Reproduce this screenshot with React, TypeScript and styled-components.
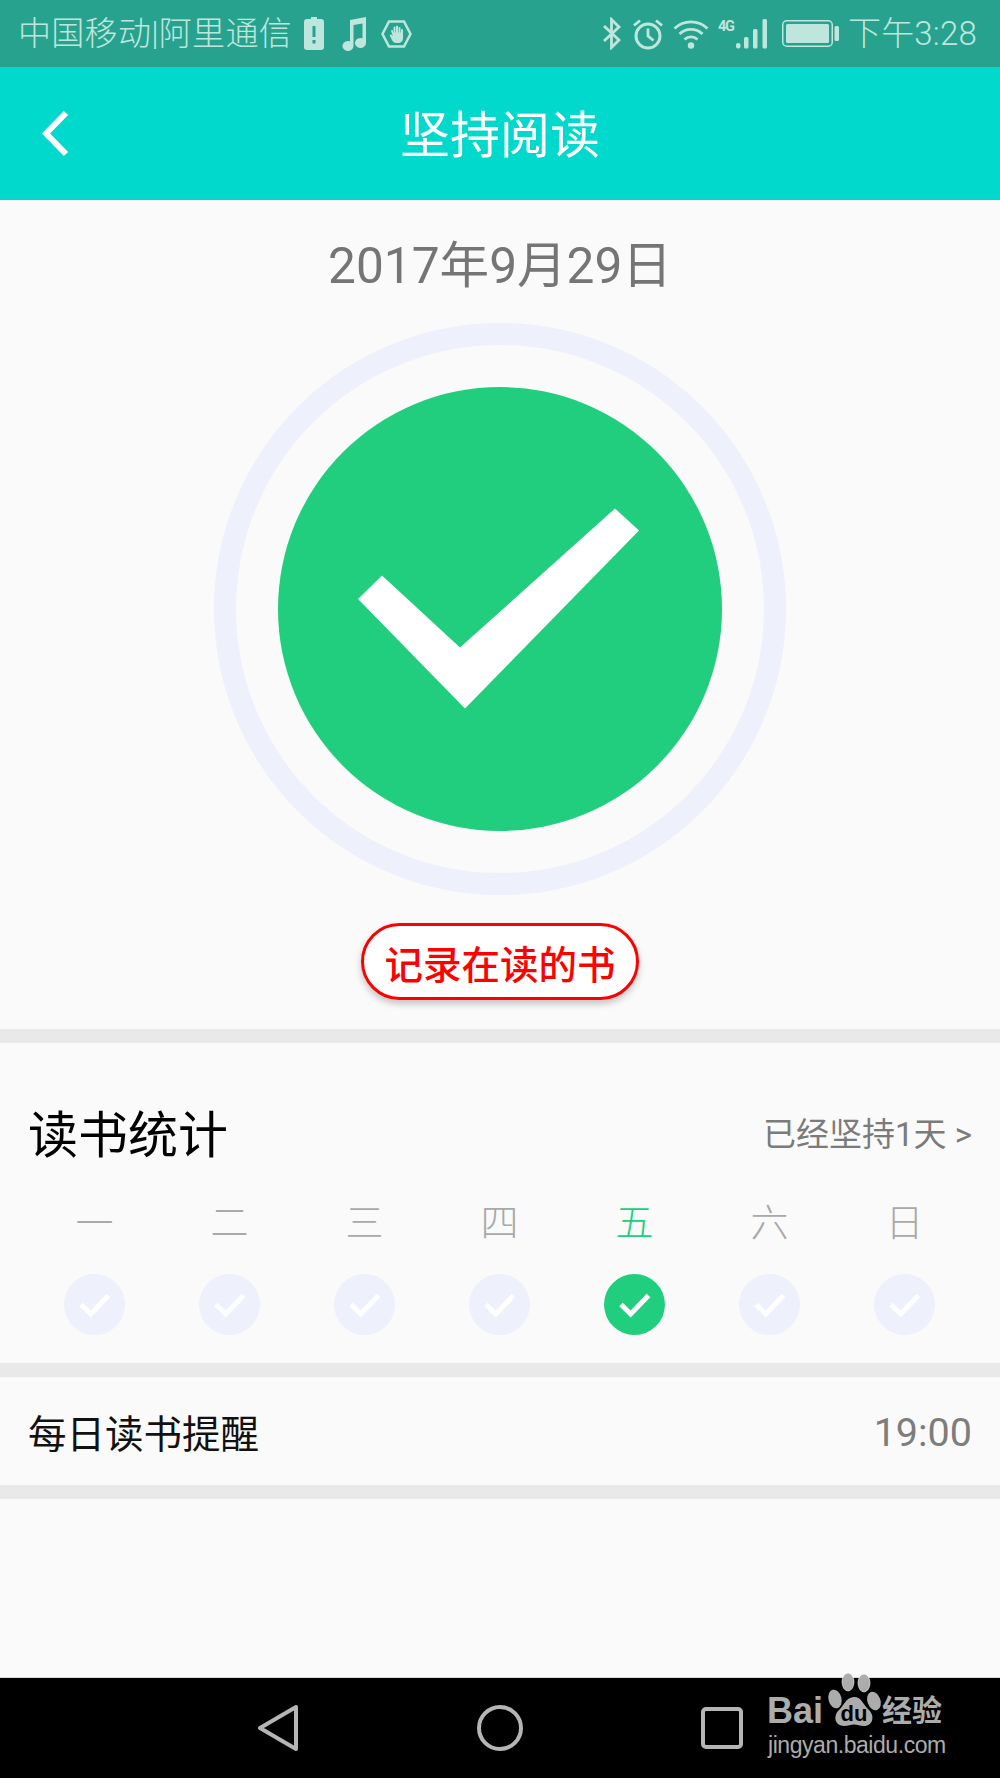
import React from "react";
import styled, { createGlobalStyle } from "styled-components";

const FONT = `Roboto, "Noto Sans CJK SC", sans-serif`;
const BAR_INK = "#bfe6dd";

const Global = createGlobalStyle`
  html, body { margin: 0; padding: 0; background: #fafafa; }
  * { box-sizing: border-box; }
`;

const Page = styled.div`
  width: 1000px;
  height: 1778px;
  display: flex;
  flex-direction: column;
  background: #fafafa;
  font-family: ${FONT};
  overflow: hidden;
`;

const StatusBar = styled.div`
  height: 67px;
  flex: none;
  background: #27a28f;
  color: ${BAR_INK};
  display: flex;
  align-items: center;
  justify-content: space-between;
  padding: 0 23px 0 18px;
`;
const StatusGroup = styled.div`
  display: flex;
  align-items: center;
`;
const Carrier = styled.span`
  font-size: 33px;
  line-height: 40px;
  font-weight: 300;
  letter-spacing: 0.3px;
  margin-right: 12px;
`;
const Clock = styled.span`
  font-size: 33px;
  line-height: 40px;
  font-weight: 300;
  letter-spacing: 0.2px;
  margin-left: 9px;
`;
const BarIcon = styled.svg<{ $gap?: number }>`
  display: block;
  flex: none;
  margin-left: ${(p) => p.$gap ?? 0}px;
`;

const Header = styled.header`
  height: 133px;
  flex: none;
  background: #00d9cc;
  display: grid;
  grid-template-columns: 100px 1fr 100px;
  align-items: center;
`;
const Back = styled.svg`
  display: block;
  margin-left: 40px;
`;
const Title = styled.h1`
  margin: 0;
  padding-top: 5px;
  text-align: center;
  color: #fff;
  font-size: 50px;
  line-height: 60px;
  font-weight: 400;
`;

const Hero = styled.section`
  display: flex;
  flex-direction: column;
  align-items: center;
  padding: 34px 0 29px;
`;
const DateLine = styled.div`
  font-size: 49.600px;
  line-height: 64px;
  color: #757575;
`;
const Ring = styled.div`
  width: 572px;
  height: 572px;
  margin-top: 25px;
  border: 22px solid #eef0fb;
  border-radius: 50%;
  display: flex;
  align-items: center;
  justify-content: center;
`;
const Disc = styled.div`
  width: 444px;
  height: 444px;
  border-radius: 50%;
  background: #20ce7d;
`;
const RecordButton = styled.button`
  width: 278px;
  height: 77px;
  margin-top: 28px;
  padding: 0;
  border: 3px solid #ff0000;
  border-radius: 39px;
  background: #fff;
  color: #ff0000;
  font-family: ${FONT};
  font-size: 38.500px;
  font-weight: 500;
  box-shadow: 0 4px 7px rgba(0, 0, 0, 0.22);
`;

const Divider = styled.div`
  height: 14px;
  flex: none;
  background: #e9e9e9;
`;

const Stats = styled.section`
  padding: 62px 0 28px;
`;
const StatsHead = styled.div`
  display: flex;
  align-items: center;
  justify-content: space-between;
  padding: 0 28px;
  height: 60px;
`;
const StatsTitle = styled.h2`
  margin: 0;
  padding-top: 2px;
  font-size: 50px;
  line-height: 60px;
  font-weight: 400;
  color: #000;
`;
const Streak = styled.span`
  font-size: 33px;
  line-height: 40px;
  margin-top: -1px;
  color: #7b7b7b;
`;
const Week = styled.div`
  display: grid;
  grid-template-columns: repeat(7, 135px);
  padding: 36px 0 0 27px;
`;
const Day = styled.div`
  display: flex;
  flex-direction: column;
  align-items: center;
  gap: 29px;
`;
const DayName = styled.span<{ $on?: boolean }>`
  font-size: 38px;
  line-height: 44px;
  font-weight: 300;
  color: ${(p) => (p.$on ? "#20ce7d" : "#a9a9a9")};
`;
const DayMark = styled.div<{ $on?: boolean }>`
  width: 61px;
  height: 61px;
  border-radius: 50%;
  background: ${(p) => (p.$on ? "#20ce7d" : "#eef0fb")};
`;

const Reminder = styled.section`
  height: 108px;
  display: flex;
  align-items: center;
  justify-content: space-between;
  padding: 0 28px;
`;
const ReminderLabel = styled.span`
  font-size: 38.500px;
  color: #111;
`;
const ReminderTime = styled.span`
  font-size: 39.500px;
  padding-top: 2px;
  color: #7d7d7d;
`;

const Spacer = styled.div`
  flex: 1;
`;

const NavBar = styled.nav`
  position: relative;
  height: 101px;
  flex: none;
  background: #000;
  border-top: 1px solid #d8d8d8;
  display: flex;
  align-items: center;
  justify-content: center;
  gap: 172px;
  padding: 0 1px 1px 0;
`;
const NavIcon = styled.svg`
  display: block;
`;
const Watermark = styled.div`
  position: absolute;
  left: 767px;
  top: -6px;
  width: 184px;
  color: #acacac;
`;
const MarkTop = styled.div`
  display: flex;
  align-items: flex-start;
  height: 56px;
`;
const MarkBai = styled.span`
  font-family: "Liberation Sans", sans-serif;
  font-weight: 700;
  font-size: 36px;
  line-height: 34px;
  margin-top: 22px;
`;
const MarkCn = styled.span`
  font-size: 30px;
  line-height: 34px;
  font-weight: 700;
  margin: 22px 0 0 -3px;
`;
const MarkUrl = styled.div`
  font-family: "Liberation Sans", sans-serif;
  font-size: 23px;
  line-height: 28px;
  letter-spacing: -0.45px;
  margin: 3px 0 0 1px;
`;

const Tick: React.FC = () => (
  <svg width="61" height="61" viewBox="0 0 61 61" style={{ display: "block" }}>
    <path d="M17 30.5 L26.7 40 L44.5 21.5" fill="none" stroke="#fff" strokeWidth="5" />
  </svg>
);

const days = ["一", "二", "三", "四", "五", "六", "日"];

export default function App() {
  return (
    <Page>
      <Global />
      <StatusBar>
        <StatusGroup>
          <Carrier>中国移动|阿里通信</Carrier>
          <BarIcon width="20" height="33" viewBox="0 0 20 33">
            <path fillRule="evenodd" fill={BAR_INK} d="M7 0h6v2h4a3 3 0 0 1 3 3v25a3 3 0 0 1-3 3H3a3 3 0 0 1-3-3V5a3 3 0 0 1 3-3h4zM8.500 9v11h3V9zM8.500 23v3.500h3V23z" />
          </BarIcon>
          <BarIcon $gap={17} width="26" height="34" viewBox="0 0 26 34">
            <path fill={BAR_INK} d="M9 3 L25 0 V26 a5.500 5 0 1 1-3.500-4.700 V6.500 L12.500 8 V29 a5.500 5 0 1 1-3.500-4.700z" />
          </BarIcon>
          <BarIcon $gap={14} width="31" height="28" viewBox="0 0 31 28">
            <path d="M8 1.500h15L29.500 14 23 26.500H8L1.500 14z" fill="none" stroke={BAR_INK} strokeWidth="2.500" />
            <path fill={BAR_INK} d="M10 11a1 1 0 0 1 2 0v1.500h.5V7.500a1 1 0 0 1 2 0v5h.5V6.500a1 1 0 0 1 2 0v6h.5V8a1 1 0 0 1 2 0v4.500h.5V10a1 1 0 0 1 2 0v8c0 3-2 5-5 5h-1.500c-2.500 0-3.500-1-4.500-3l-2-4c-.7-1.400 1-2.200 2-1l1 1.200z" />
          </BarIcon>
        </StatusGroup>
        <StatusGroup>
          <BarIcon width="20" height="33" viewBox="0 0 20 33">
            <path d="M2 9 L17 23 L9.500 30.500 V2.500 L17 10 L2 24" fill="none" stroke={BAR_INK} strokeWidth="2.800" />
          </BarIcon>
          <BarIcon $gap={10} width="32" height="32" viewBox="0 0 32 32">
            <circle cx="16" cy="18" r="12" fill="none" stroke={BAR_INK} strokeWidth="3" />
            <path d="M16 10.500V18l5.500 4.500M2 7.500 8 2.500M30 7.500 24 2.500" fill="none" stroke={BAR_INK} strokeWidth="2.800" />
          </BarIcon>
          <BarIcon $gap={9} width="36" height="30" viewBox="0 0 36 30">
            <path d="M1.500 9.500a24 24 0 0 1 33 0M6.500 15a16.500 16.500 0 0 1 23 0M11.500 20.500a9.500 9.500 0 0 1 13 0" fill="none" stroke={BAR_INK} strokeWidth="2.800" />
            <circle cx="18" cy="26.500" r="3.200" fill={BAR_INK} />
          </BarIcon>
          <BarIcon $gap={9} width="50" height="31" viewBox="0 0 50 31">
            <text x="0" y="13" fontFamily="Roboto, sans-serif" fontWeight="700" fontSize="14.500" fill={BAR_INK} textLength="17">4G</text>
            <rect x="18" y="25" width="4.500" height="5.500" rx="2" fill={BAR_INK} />
            <rect x="26" y="19" width="4.500" height="11.500" rx="1.500" fill={BAR_INK} />
            <rect x="35" y="11" width="4.500" height="19.500" rx="1.500" fill={BAR_INK} />
            <rect x="44.500" y="1" width="4.500" height="29.500" rx="1.500" fill={BAR_INK} />
          </BarIcon>
          <BarIcon $gap={14} width="57" height="27" viewBox="0 0 57 27">
            <rect x="0.750" y="0.750" width="49.500" height="25.500" rx="4" fill="none" stroke={BAR_INK} strokeWidth="1.500" />
            <rect x="4" y="4" width="43" height="19" rx="1.500" fill={BAR_INK} />
            <rect x="52.500" y="6" width="4.500" height="15" rx="1.500" fill={BAR_INK} />
          </BarIcon>
          <Clock>下午3:28</Clock>
        </StatusGroup>
      </StatusBar>

      <Header>
        <Back width="32" height="48" viewBox="0 0 32 48">
          <path d="M26 3 L6 23.500 L26 44" fill="none" stroke="#fff" strokeWidth="6" />
        </Back>
        <Title>坚持阅读</Title>
        <span />
      </Header>

      <Hero>
        <DateLine>2017年9月29日</DateLine>
        <Ring>
          <Disc>
            <svg width="444" height="444" viewBox="0 0 444 444" style={{ display: "block" }}>
              <path fill="#fff" d="M80 212 L104 188.500 L182 260.500 L337 121.500 L361 143.500 L187 321.500 Z" />
            </svg>
          </Disc>
        </Ring>
        <RecordButton>记录在读的书</RecordButton>
      </Hero>
      <Divider />

      <Stats>
        <StatsHead>
          <StatsTitle>读书统计</StatsTitle>
          <Streak>已经坚持1天 &gt;</Streak>
        </StatsHead>
        <Week>
          {days.map((d, i) => (
            <Day key={d}>
              <DayName $on={i === 4}>{d}</DayName>
              <DayMark $on={i === 4}>
                <Tick />
              </DayMark>
            </Day>
          ))}
        </Week>
      </Stats>
      <Divider />

      <Reminder>
        <ReminderLabel>每日读书提醒</ReminderLabel>
        <ReminderTime>19:00</ReminderTime>
      </Reminder>
      <Divider />
      <Spacer />

      <NavBar>
        <NavIcon width="50" height="50" viewBox="0 0 50 50">
          <path d="M43 4 V46 L7 25 Z" fill="none" stroke="#b5b5b5" strokeWidth="4" strokeLinejoin="round" />
        </NavIcon>
        <NavIcon width="50" height="50" viewBox="0 0 50 50">
          <circle cx="25" cy="25" r="21" fill="none" stroke="#b5b5b5" strokeWidth="4" />
        </NavIcon>
        <NavIcon width="50" height="50" viewBox="0 0 50 50">
          <rect x="6" y="6" width="38" height="38" rx="3" fill="none" stroke="#b5b5b5" strokeWidth="4" />
        </NavIcon>
        <Watermark>
          <MarkTop>
            <MarkBai>Bai</MarkBai>
            <svg width="62" height="60" viewBox="0 0 62 60" style={{ flex: "none" }}>
              <g fill="#acacac">
                <ellipse cx="12" cy="27" rx="6.500" ry="9.500" transform="rotate(-15 12 27)" />
                <ellipse cx="25" cy="10" rx="6" ry="9" stroke="#fafafa" strokeOpacity="0.6" />
                <ellipse cx="41" cy="11" rx="6" ry="9" stroke="#fafafa" strokeOpacity="0.6" />
                <ellipse cx="51" cy="29" rx="6.500" ry="9.500" transform="rotate(-20 51 29)" />
                <path d="M31 25c8 0 9 8 15 13 6 6 4 16-5 16-4 0-7-1.500-10-1.500S25 54 21 54c-9 0-11-9-6-15 6-5 8-14 16-14z" />
              </g>
              <text x="31" y="49" textAnchor="middle" fontFamily="Liberation Sans, sans-serif" fontWeight="700" fontSize="22" fill="#000">du</text>
            </svg>
            <MarkCn>经验</MarkCn>
          </MarkTop>
          <MarkUrl>jingyan.baidu.com</MarkUrl>
        </Watermark>
      </NavBar>
    </Page>
  );
}
